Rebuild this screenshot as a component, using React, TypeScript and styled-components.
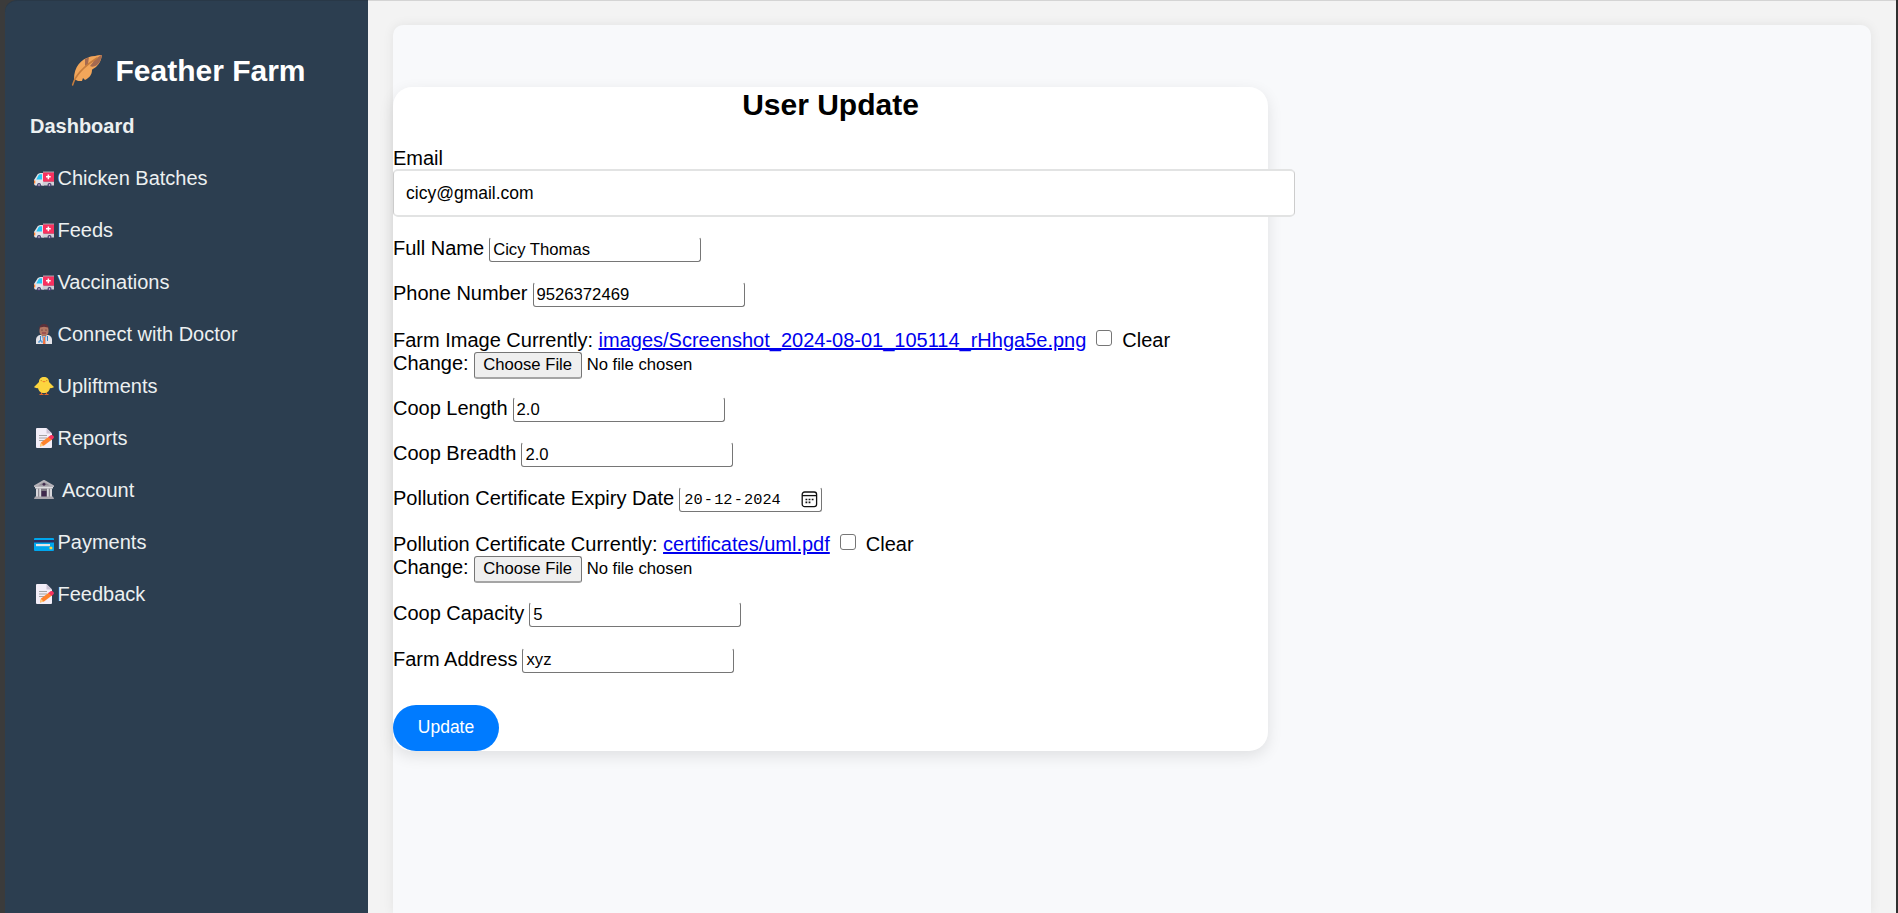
import React from 'react';
import styled, { createGlobalStyle } from 'styled-components';

const GlobalStyle = createGlobalStyle`
  *, *::before, *::after { box-sizing: border-box; }
  body {
    margin: 0;
    overflow: hidden;
    background: #303030;
    font-family: "Liberation Sans", Arial, sans-serif;
    font-size: 20px;
    line-height: 23px;
    color: #000;
  }
`;

const Page = styled.div`
  display: flex;
  height: 100vh;
  padding: 0 2px 0 5px;
  background: linear-gradient(to right, #3b3b3b 0, #3b3b3b 30px, #2f2f2f 30px);
`;

const Sidebar = styled.aside`
  flex: 0 0 363px;
  padding: 52px 25px 0;
  background: #2c3e50;
  border-top: 1px solid #293847;
  border-top-left-radius: 12px;
  color: #ecf0f1;
`;

const Brand = styled.h1`
  display: flex;
  align-items: center;
  justify-content: center;
  gap: 11px;
  height: 36px;
  margin: 0 0 26px;
  padding-left: 3px;
  font-size: 30px;
  line-height: 36px;
  color: #fff;
`;

const NavTitle = styled.div`
  height: 23px;
  margin-bottom: 29px;
  font-weight: bold;
`;

const NavList = styled.nav`
  display: flex;
  flex-direction: column;
  gap: 29px;
`;

const NavItem = styled.a<{ $gap?: number }>`
  display: flex;
  align-items: flex-start;
  gap: ${(p) => p.$gap ?? 3.5}px;
  height: 23px;
  padding-left: 4px;
  white-space: nowrap;
  svg { flex: none; margin-top: 1px; }
`;

const Main = styled.main`
  flex: 1;
  padding: 24px 25px 0;
  background: #f3f3f3;
  border-top: 1px solid #d4d4d4;
`;

const Panel = styled.section`
  height: 100%;
  padding-top: 62px;
  background: #f8f9fb;
  border-radius: 10px 10px 0 0;
  box-shadow: 0 0 12px rgba(0, 0, 0, 0.07);
`;

const Form = styled.form`
  display: flex;
  flex-direction: column;
  width: 875px;
  height: 664px;
  background: #fff;
  border-radius: 19px;
  box-shadow: 0 5px 15px rgba(0, 0, 0, 0.1);
`;

const Title = styled.h2`
  height: 35px;
  margin: 0 0 25px;
  font-size: 30px;
  line-height: 35px;
  text-align: center;
`;

const EmailLabel = styled.label`
  height: 22px;
`;

const EmailInput = styled.input`
  width: 902px;
  height: 48px;
  padding: 0 12px;
  border: solid;
  border-width: 2px 1px;
  border-color: #e2e3e3 #ccc;
  border-radius: 5px;
  background: #fff;
  font: 17.5px "Liberation Sans", Arial, sans-serif;
  color: #000;
`;

const Row = styled.div`
  display: flex;
  gap: 5px;
  height: 25.1px;
  margin-top: 20px;
  white-space: nowrap;
`;

const Input = styled.input`
  width: 212px;
  height: 25px;
  padding: 0 3px;
  border: 1px solid #767676;
  border-top-color: transparent;
  border-radius: 3px;
  background: #fff;
  font: 16.67px "Liberation Sans", Arial, sans-serif;
  color: #000;
`;

const DateBox = styled.div`
  display: flex;
  align-items: center;
  justify-content: space-between;
  width: 143px;
  height: 25px;
  padding: 0 3px 0 4px;
  border: 1px solid #767676;
  border-top-color: transparent;
  border-radius: 3px;
  font: 15.3px "Liberation Mono", monospace;
`;

const DateText = styled.span`
  display: flex;
  gap: 1.2px;
`;

const FileBlock = styled.div<{ $shift: number }>`
  height: 50px;
  margin-top: 20px;
  padding-top: ${(p) => p.$shift}px;
  white-space: nowrap;
`;

const FileLine = styled.div`
  display: flex;
  height: 23px;
`;

const FileLink = styled.a`
  margin-left: 5.5px;
  color: #0000ee;
  text-decoration: underline;
`;

const Checkbox = styled.input`
  appearance: none;
  width: 16px;
  height: 16px;
  margin: 1px 10px 0;
  border: 1px solid #767676;
  border-radius: 3px;
  background: #fff;
`;

const FileButton = styled.button`
  width: 108px;
  height: 27px;
  margin: 0 5px;
  padding: 0;
  border: 1px solid #767676;
  border-bottom-width: 2px;
  border-bottom-color: #a5a5a5;
  border-radius: 3px;
  background: #efefef;
  font: 16.67px "Liberation Sans", Arial, sans-serif;
  color: #000;
`;

const FileStatus = styled.span`
  font-size: 16.67px;
  line-height: 25px;
`;

const SubmitButton = styled.button`
  width: 106px;
  height: 46px;
  margin-top: auto;
  padding: 0 0 1px;
  border: 0;
  border-radius: 25px;
  background: #007bff;
  color: #fff;
  font: 17.5px "Liberation Sans", Arial, sans-serif;
`;

const Feather = () => (
  <svg width="34" height="34" viewBox="0 0 34 34">
    <path d="M4 25C4 13 11 5 20 3l12-2c-1 6-3 9-6 12-3 2-4 2-4 3 0 5-3 8-7 10l-2-2-1 3-4 0Z" fill="#f2a65a" />
    <path d="M15 5l6-2.4L32 1c-1 5-2.500 8-5 10-3 2-5 2-7 1l4-5-9 5Z" fill="#a56a50" />
    <path d="M19 3l12-2-8 6-5 3Z" fill="#f2a65a" />
    <path d="M2.6 31C5 22 13 13 27 4" stroke="#c67d3d" strokeWidth="1.5" strokeLinecap="round" fill="none" />
  </svg>
);

const Ambulance = () => (
  <svg width="20" height="20" viewBox="0 0 20 20">
    <path d="M0 16v-4l3.500-5.500Q4.500 5 6.500 5H10v12.500H1Z" fill="#e5e5ea" />
    <path d="M2.300 11.500l2.200-4.200Q5 6.200 6 6.200h2v5.300Z" fill="#26c4f4" />
    <rect x="9" y="4" width="11" height="9.800" fill="#f8315f" />
    <path d="M9 3.500h11v1H9z" fill="#a8a4ae" />
    <path d="M9 13.800h11v3.700H8Z" fill="#cfced6" />
    <path d="M13.600 6.500h1.500v1.600h1.600v1.500h-1.600v1.600h-1.500V9.600H12V8.100h1.600Z" fill="#fff" />
    <path d="M0 12.500h1.300v3H0z" fill="#ff822d" />
    <circle cx="5" cy="17" r="2" fill="#433b6b" /><circle cx="5" cy="17" r=".8" fill="#e6e6e6" />
    <circle cx="15.500" cy="17" r="2" fill="#433b6b" /><circle cx="15.500" cy="17" r=".8" fill="#e6e6e6" />
  </svg>
);

const Doctor = () => (
  <svg width="20" height="20" viewBox="0 0 20 20">
    <path d="M2 20v-4c0-3 2-5 5-5h6c3 0 5 2 5 5v4Z" fill="#e4e3e8" />
    <path d="M7.500 10h5l-.5 4h-4Z" fill="#a56a50" />
    <path d="M8.500 12h3l.8 3-1.200 5H9.500L8 15Z" fill="#8fbfe8" />
    <path d="M9.500 13h1.400l.6 7h-2.600Z" fill="#f9713b" />
    <rect x="5.500" y="1.500" width="9" height="10" rx="4" fill="#b47763" />
    <path d="M5 6c0-4 2-6 5-6s5 2 5 6l-1-2.500-4-.7-4 .7Z" fill="#5c3039" />
    <path d="M8 9h4" stroke="#8a3040" />
    <circle cx="8" cy="6" r=".6" fill="#40242c" /><circle cx="12" cy="6" r=".6" fill="#40242c" />
    <path d="M6.500 12v5m-1.500 2v-2h3v2M13.500 12v5" stroke="#3385cc" strokeWidth="1" fill="none" />
  </svg>
);

const Chick = () => (
  <svg width="20" height="20" viewBox="0 0 20 20">
    <path d="M7.500 16v2.500M12.500 16v2.500M5.500 18.500h4M10.500 18.500h4" stroke="#e0662c" strokeWidth="1.200" />
    <path d="M5 6c0-3.500 2-5 5-5s5 1.500 5 5l5 5c-1 1-3 1.500-4 1-.5 3-3 5-6 5s-5.500-2-6-5c-1 .5-3 0-4-1Z" fill="#fcd53f" />
    <path d="M8 5h4L10 6.500Z" fill="#f3852b" />
    <circle cx="7.200" cy="4.600" r=".6" fill="#c47a20" /><circle cx="12.800" cy="4.600" r=".6" fill="#c47a20" />
  </svg>
);

const Memo = () => (
  <svg width="20" height="20" viewBox="0 0 20 20">
    <path d="M2 1q0-1 1-1h9.500L18 5.500V19q0 1-1 1H3q-1 0-1-1Z" fill="#f3eef8" />
    <path d="M12.500 0v5.500H18Z" fill="#cdc4d6" />
    <path d="M5 7.500h8M5 10h8M5 12.500h5" stroke="#9b9b9b" strokeWidth=".9" />
    <path d="M6 18.500l1-4L15 8.500l3 3-8 6Z" fill="#ff822d" />
    <path d="M6 18.500l1-3.500 2.500 2.500Z" fill="#ffce7c" />
    <path d="M14.500 9l2-1.700c2-1 4 1 3.200 2.700l-2 2Z" fill="#f8315f" />
  </svg>
);

const Bank = () => (
  <svg width="20" height="20" viewBox="0 0 20 20">
    <path d="M3 8h14v9H3z" fill="#7d7882" />
    <path d="M0 7V5.500L9.500 0h1L20 5.500V7Z" fill="#b4b1b8" />
    <path d="M4 5.500L10 2l6 3.500Z" fill="#8c8791" />
    <circle cx="10" cy="4.300" r="1.400" fill="#402a4e" />
    <path d="M1 7h18v1.500H1z" fill="#dedde1" />
    <path d="M2 8.500h2.200V17H2zM5.200 8.500H7V17H5.200zM13 8.500h1.800V17H13zM15.800 8.500H18V17h-2.200z" fill="#d8d7dc" />
    <path d="M7.500 11h5v6h-5z" fill="#402a4e" />
    <path d="M1 16.500h18L20 19H0Z" fill="#a9a6ad" />
  </svg>
);

const Card = () => (
  <svg width="20" height="20" viewBox="0 0 20 20">
    <rect y="6" width="20" height="13" rx="1" fill="#00a6ed" />
    <path d="M0 8h20v2.500H0z" fill="#312d5e" />
    <rect x="2" y="12" width="14" height="2.200" fill="#e6e6e6" />
    <rect x="15.500" y="14.800" width="2.800" height="2.500" rx=".6" fill="#fcd53f" />
  </svg>
);

const Calendar = () => (
  <svg width="17" height="17" viewBox="0 0 17 17" fill="none" stroke="#111" strokeWidth="1.300">
    <rect x="1.200" y="1" width="14.400" height="14.600" rx="2.400" />
    <path d="M1 4.600h15" />
    <path d="M4.500 8.500h1.800M7.600 8.500h1.800M10.700 8.500h1.800M4.500 11.300h1.800M7.600 11.300h1.800" strokeWidth="1.700" />
  </svg>
);

const navItems: { label: string; icon: React.ReactNode; gap?: number }[] = [
  { label: 'Chicken Batches', icon: <Ambulance /> },
  { label: 'Feeds', icon: <Ambulance /> },
  { label: 'Vaccinations', icon: <Ambulance /> },
  { label: 'Connect with Doctor', icon: <Doctor /> },
  { label: 'Upliftments', icon: <Chick /> },
  { label: 'Reports', icon: <Memo /> },
  { label: 'Account', icon: <Bank />, gap: 8 },
  { label: 'Payments', icon: <Card /> },
  { label: 'Feedback', icon: <Memo /> },
];

const TextField = ({ label, value }: { label: string; value: string }) => (
  <Row>
    <label>{label}</label>
    <Input defaultValue={value} />
  </Row>
);

const FileField = ({ label, file, shift }: { label: string; file: string; shift: number }) => (
  <FileBlock $shift={shift}>
    <FileLine>
      <span>{label} Currently:</span>
      <FileLink>{file}</FileLink>
      <Checkbox type="checkbox" />
      <span>Clear</span>
    </FileLine>
    <FileLine>
      <span>Change:</span>
      <FileButton type="button">Choose File</FileButton>
      <FileStatus>No file chosen</FileStatus>
    </FileLine>
  </FileBlock>
);

export default function App() {
  return (
    <>
      <GlobalStyle />
      <Page>
        <Sidebar>
          <Brand>
            <Feather />
            <span>Feather Farm</span>
          </Brand>
          <NavTitle>Dashboard</NavTitle>
          <NavList>
            {navItems.map((item) => (
              <NavItem key={item.label} $gap={item.gap}>
                {item.icon}
                <span>{item.label}</span>
              </NavItem>
            ))}
          </NavList>
        </Sidebar>
        <Main>
          <Panel>
            <Form>
              <Title>User Update</Title>
              <EmailLabel>Email</EmailLabel>
              <EmailInput defaultValue="cicy@gmail.com" />
              <TextField label="Full Name" value="Cicy Thomas" />
              <TextField label="Phone Number" value="9526372469" />
              <FileField label="Farm Image" file="images/Screenshot_2024-08-01_105114_rHhga5e.png" shift={1.5} />
              <TextField label="Coop Length" value="2.0" />
              <TextField label="Coop Breadth" value="2.0" />
              <Row>
                <label>Pollution Certificate Expiry Date</label>
                <DateBox>
                  <DateText>
                    <span>20</span>
                    <span>-</span>
                    <span>12</span>
                    <span>-</span>
                    <span>2024</span>
                  </DateText>
                  <Calendar />
                </DateBox>
              </Row>
              <FileField label="Pollution Certificate" file="certificates/uml.pdf" shift={1} />
              <TextField label="Coop Capacity" value="5" />
              <TextField label="Farm Address" value="xyz" />
              <SubmitButton type="button">Update</SubmitButton>
            </Form>
          </Panel>
        </Main>
      </Page>
    </>
  );
}
